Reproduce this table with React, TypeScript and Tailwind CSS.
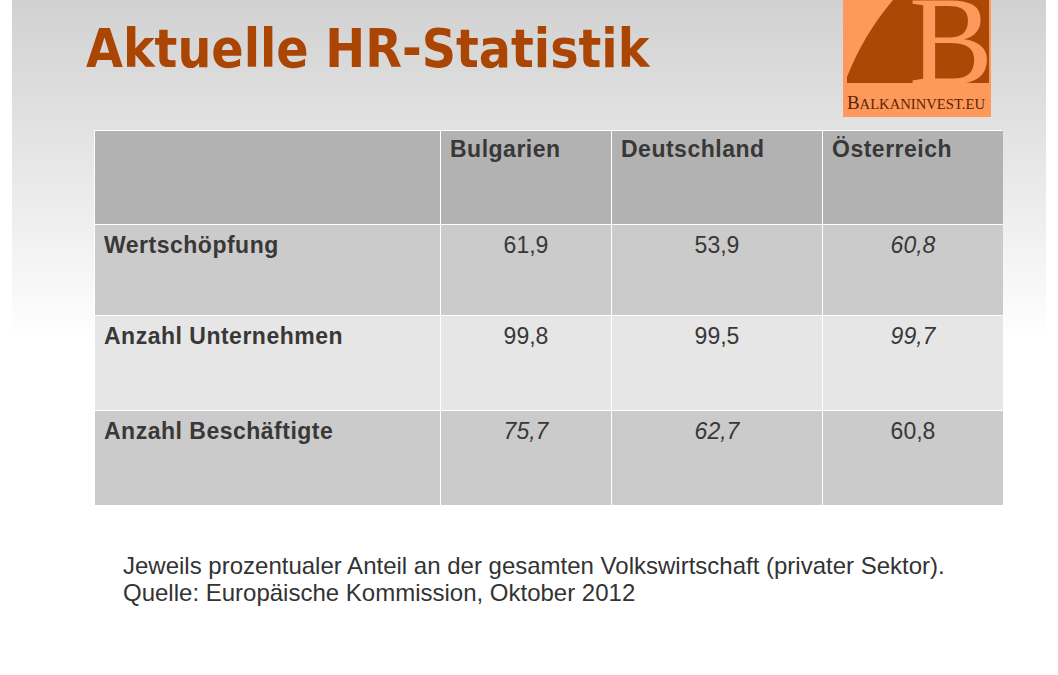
import React from "react";

type Cell = { v: string; italic?: boolean };
type Row = { label: string; bg: string; cells: Cell[] };

const rows: Row[] = [
  {
    label: "Wertschöpfung",
    bg: "bg-[#cbcbcb]",
    cells: [{ v: "61,9" }, { v: "53,9" }, { v: "60,8", italic: true }],
  },
  {
    label: "Anzahl Unternehmen",
    bg: "bg-[#e6e6e6]",
    cells: [{ v: "99,8" }, { v: "99,5" }, { v: "99,7", italic: true }],
  },
  {
    label: "Anzahl Beschäftigte",
    bg: "bg-[#cbcbcb]",
    cells: [{ v: "75,7", italic: true }, { v: "62,7", italic: true }, { v: "60,8" }],
  },
];

const countries = ["Bulgarien", "Deutschland", "Österreich"];

function Logo() {
  return (
    <svg width="148" height="117" viewBox="0 0 148 117" className="block">
      <rect width="148" height="117" fill="#fd995a" />
      <path d="M4 83 L4 77 A273 273 0 0 1 50 0 L146 0 L146 83 Z" fill="#ad4706" />
      <text
        x="66"
        y="84"
        fontSize="126"
        fill="#fd995a"
        fontFamily="'Liberation Serif', serif"
      >
        B
      </text>
      <rect x="0" y="83" width="148" height="5" fill="#fd995a" />
      <text
        x="4"
        y="109"
        fill="#5e2406"
        fontFamily="'Liberation Serif', serif"
        textLength="138"
        lengthAdjust="spacingAndGlyphs"
      >
        <tspan fontSize="18">B</tspan>
        <tspan fontSize="14">ALKANINVEST.EU</tspan>
      </text>
    </svg>
  );
}

export default function App() {
  return (
    <div className="min-h-screen w-[1058px] h-[675px] overflow-hidden bg-white px-[12px]">
      <div className="h-full bg-gradient-to-b from-[#d1d1d1] to-white bg-[length:100%_340px] bg-no-repeat">
        <div className="flex justify-between pl-[74px] pr-[55px]">
          <h1 className="mt-[22px] text-[53px] leading-none font-bold text-[#ab4503] font-['DejaVu_Sans_Condensed','DejaVu_Sans',sans-serif] font-stretch-condensed">
            Aktuelle HR-Statistik
          </h1>
          <Logo />
        </div>

        <div className="ml-[82px] mt-[13px] w-[908px] font-['Liberation_Sans',Arial,sans-serif] text-[23px] tracking-[0.5px] text-[#383838]">
          <div className="grid grid-cols-[345px_170px_210px_180px] gap-px bg-white p-px">
            <div className="h-[93px] bg-[#b2b2b2]" />
            {countries.map((c) => (
              <div key={c} className="h-[93px] bg-[#b2b2b2] pl-[9px] pt-[7px] font-bold leading-none">
                {c}
              </div>
            ))}
            {rows.map((r, i) => (
              <React.Fragment key={r.label}>
                <div
                  className={`${i === 0 ? "h-[90px]" : "h-[94px]"} ${r.bg} pl-[9px] pt-[9px] font-bold leading-none`}
                >
                  {r.label}
                </div>
                {r.cells.map((c, j) => (
                  <div
                    key={j}
                    className={`${r.bg} pt-[9px] text-center leading-none tracking-normal ${c.italic ? "italic" : ""}`}
                  >
                    {c.v}
                  </div>
                ))}
              </React.Fragment>
            ))}
          </div>
        </div>

        <div className="ml-[111px] mt-[46px] font-['Liberation_Sans',Arial,sans-serif] text-[24px] leading-[27px] text-[#333333]">
          <p>Jeweils prozentualer Anteil an der gesamten Volkswirtschaft (privater Sektor).</p>
          <p>Quelle: Europäische Kommission, Oktober 2012</p>
        </div>
      </div>
    </div>
  );
}
